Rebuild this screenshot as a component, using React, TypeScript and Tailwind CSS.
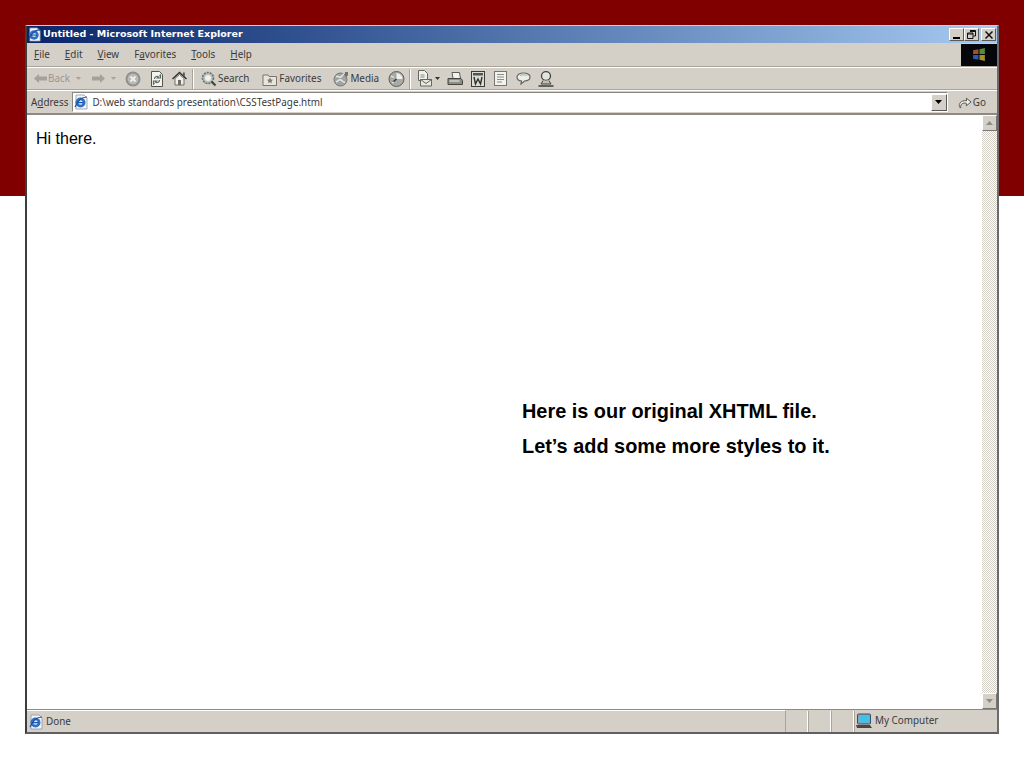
const ui = "font-['Noto_Sans',sans-serif] text-[9.900px] text-[#3a3a3a] whitespace-nowrap"

function IeIcon({ size = 16 }: { size?: number }) {
  return (
    <svg width={size} height={size} viewBox="0 0 16 16" className="shrink-0">
      <path d="M3 1h8l3 3v11H3z" fill="#f4f6fa" stroke="#8a93a8" strokeWidth="0.8" />
      <circle cx="7.5" cy="8.5" r="5" fill="#2f6fc4" />
      <circle cx="7.5" cy="8.5" r="2.2" fill="#dfeaf8" />
      <rect x="5" y="8" width="5.5" height="1.2" fill="#1f57a8" />
      <path d="M2 13C5 6 10 3 14 3" fill="none" stroke="#1d4f9c" strokeWidth="1.2" />
    </svg>
  )
}

function Arrow({ dir, color }: { dir: 'left' | 'right'; color: string }) {
  return (
    <svg width="15" height="11" viewBox="0 0 15 11" className="shrink-0">
      <path d={dir === 'left' ? 'M1 5.5L6 1v2.5h8v4H6V10z' : 'M14 5.5L9 1v2.5H1v4h8V10z'} fill={color} />
    </svg>
  )
}

function Caret({ color = '#a5a29b' }: { color?: string }) {
  return (
    <svg width="5" height="3" viewBox="0 0 5 3" className="shrink-0">
      <path d="M0 0h5L2.5 3z" fill={color} />
    </svg>
  )
}

function Separator() {
  return <div className="w-[2px] h-[20px] border-l border-l-[#a5a29b] border-r border-r-white shrink-0" />
}

function Stop() {
  return (
    <svg width="16" height="16" viewBox="0 0 16 16" className="shrink-0">
      <circle cx="8" cy="8" r="7.5" fill="#8f8f8c" />
      <circle cx="8" cy="8" r="5.5" fill="#b9b9b6" />
      <path d="M5.5 5.5l5 5m0-5l-5 5" stroke="#efefec" strokeWidth="1.8" />
    </svg>
  )
}

function Refresh() {
  return (
    <svg width="14" height="16" viewBox="0 0 14 16" className="shrink-0">
      <path d="M1.5.5h8l3 3v12h-11z" fill="#f3f3f1" stroke="#55554f" />
      <path d="M4.5 8a2.500 2.500 0 0 1 4-2l-1 1h3V4l-1 1" fill="none" stroke="#5c6a5c" strokeWidth="1.200" />
      <path d="M9.500 9a2.500 2.500 0 0 1-4 2l1-1h-3v3l1-1" fill="none" stroke="#5c6a5c" strokeWidth="1.200" />
    </svg>
  )
}

function Home() {
  return (
    <svg width="15" height="15" viewBox="0 0 15 15" className="shrink-0">
      <path d="M3 7.500V14h9V7.500L7.500 3.500z" fill="#efefe9" stroke="#55554f" strokeWidth="0.800" />
      <path d="M0.500 8L7.500 1.500l7 6.500" fill="none" stroke="#33332f" strokeWidth="1.500" />
      <rect x="6" y="9" width="3" height="5" fill="#6f6f67" />
      <rect x="11" y="1.500" width="1.800" height="3.500" fill="#55554f" />
    </svg>
  )
}

function SearchIcon() {
  return (
    <svg width="16" height="16" viewBox="0 0 16 16" className="shrink-0">
      <circle cx="7" cy="7" r="5.500" fill="#b7c2ba" stroke="#6b716c" strokeWidth="1.600" strokeDasharray="2 1" />
      <circle cx="7" cy="7" r="3" fill="#eef1ef" />
      <path d="M10.500 10.500l4 4" stroke="#3f433f" strokeWidth="2.200" />
    </svg>
  )
}

function FavoritesIcon() {
  return (
    <svg width="16" height="14" viewBox="0 0 16 14" className="shrink-0">
      <path d="M1 3h5l1 1.500h7.500V13.500H1z" fill="#e7e5de" stroke="#77756e" />
      <path d="M8 5.500l1 2 2 .2-1.500 1.500.4 2L8 10.200 6.100 11.200l.4-2L5 7.700l2-.2z" fill="#7c7a72" />
    </svg>
  )
}

function MediaIcon() {
  return (
    <svg width="17" height="16" viewBox="0 0 17 16" className="shrink-0">
      <circle cx="7.500" cy="8.500" r="6.500" fill="#a0a3a0" stroke="#777a76" />
      <path d="M3 6c2-2 3 1 5 0s1-3 3-3M3 11c2-1 3-3 5-2s2 3 4 2" stroke="#e3e5e2" strokeWidth="1.500" fill="none" />
      <path d="M12 1v5l3-1.500V1z" fill="#6f726e" />
    </svg>
  )
}

function HistoryIcon() {
  return (
    <svg width="17" height="16" viewBox="0 0 17 16" className="shrink-0">
      <circle cx="8.500" cy="8" r="7.500" fill="#a9aaa6" stroke="#5d5e5a" />
      <path d="M8.500 8V2A6 6 0 0 1 14.500 8z" fill="#f0f0ec" />
      <path d="M8.500 8l-3.500 3" stroke="#33342f" strokeWidth="1.500" />
      <path d="M3 5l3 1.500M4 12l2-1" stroke="#e8e8e4" strokeWidth="1.200" />
    </svg>
  )
}

function MailIcon() {
  return (
    <svg width="16" height="17" viewBox="0 0 16 17" className="shrink-0">
      <path d="M1.500.5h6l3 3v7h-9z" fill="#f0f0ec" stroke="#66665f" />
      <path d="M3.500 5h4M3.500 7h4" stroke="#8a8a82" />
      <path d="M3.500 9.500h11v6.500h-11z" fill="#e8e8e2" stroke="#66665f" />
      <path d="M3.500 9.500l5.500 4 5.500-4" fill="none" stroke="#66665f" />
    </svg>
  )
}

function PrintIcon() {
  return (
    <svg width="16" height="14" viewBox="0 0 16 14" className="shrink-0">
      <path d="M5 .500h7.500l1 6H6z" fill="#f2f2ee" stroke="#5d5d56" />
      <path d="M1 6.500h13l1.500 2v4H1z" fill="#8f8f88" stroke="#45453f" />
      <path d="M2.500 9h10" stroke="#e4e4e0" strokeWidth="1.200" />
    </svg>
  )
}

function WordIcon() {
  return (
    <svg width="14" height="16" viewBox="0 0 14 16" className="shrink-0">
      <rect x="0.500" y="0.500" width="13" height="15" fill="#dcdcd7" stroke="#3d3d38" />
      <rect x="2" y="2" width="10" height="2.500" fill="#55554f" />
      <path d="M3 6l1.500 7 2.500-5 2.500 5L11 6" fill="none" stroke="#2e2e2a" strokeWidth="1.400" />
    </svg>
  )
}

function DiscussIcon() {
  return (
    <svg width="13" height="15" viewBox="0 0 13 15" className="shrink-0">
      <rect x="0.500" y="0.500" width="12" height="14" fill="#f2f2ee" stroke="#77776f" />
      <path d="M3 3.500h7M3 6h7M3 8.500h7M3 11h5" stroke="#8c8c84" />
    </svg>
  )
}

function BubbleIcon() {
  return (
    <svg width="15" height="13" viewBox="0 0 15 13" className="shrink-0">
      <path d="M7.500 1C3.500 1 1 2.800 1 5s2 3.800 4.500 4L5 12l3.500-3c3.500-.2 5.500-1.800 5.500-4S11.500 1 7.500 1z" fill="#ecece8" stroke="#66665f" strokeWidth="1.200" />
      <path d="M4 3.500c2-.8 5-.8 7 0" stroke="#a8a8a0" fill="none" />
    </svg>
  )
}

function PersonIcon() {
  return (
    <svg width="16" height="16" viewBox="0 0 16 16" className="shrink-0">
      <ellipse cx="8" cy="5" rx="4.500" ry="4.300" fill="#e4e4df" stroke="#45453f" strokeWidth="1.300" />
      <path d="M5 9.500L3 13h10l-2-3.500" fill="#bdbdb7" stroke="#45453f" />
      <path d="M.500 15h15" stroke="#45453f" strokeWidth="1.600" />
    </svg>
  )
}

function WinButton({ children }: { children: React.ReactNode }) {
  return (
    <div className="w-[15px] h-[13px] bg-[#d4d0c8] border-t border-l border-t-white border-l-white border-r border-b border-r-[#5a5a5a] border-b-[#5a5a5a] flex items-center justify-center">
      {children}
    </div>
  )
}

function ScrollButton({ up }: { up: boolean }) {
  return (
    <div className="h-[16px] bg-[#d4d0c8] border-t border-l border-t-white border-l-white border-r border-b border-r-[#777] border-b-[#777] flex items-center justify-center shrink-0">
      <svg width="7" height="4" viewBox="0 0 7 4">
        <path d={up ? 'M3.500 0L7 4H0z' : 'M0 0h7L3.500 4z'} fill="#8d8d88" />
      </svg>
    </div>
  )
}

const menus: [string, string, string][] = [
  ['', 'F', 'ile'],
  ['', 'E', 'dit'],
  ['', 'V', 'iew'],
  ['F', 'a', 'vorites'],
  ['', 'T', 'ools'],
  ['', 'H', 'elp'],
]

export default function App() {
  return (
    <div className="relative w-[1024px] h-[768px] bg-white overflow-hidden">
      <div className="h-[196px] bg-[#800000]" />

      <div className="absolute left-[25px] top-[25px] w-[974px] h-[709px] flex flex-col bg-[#d4d0c8] border-l-2 border-l-[#3d3d3d] border-r-2 border-r-[#6b6b6b] border-b-2 border-b-[#5f5f5f] border-t border-t-[#d4d0c8]">
        <div className="h-[17px] shrink-0 flex items-center pl-[0px] pr-[1px] bg-gradient-to-r from-[#0a246a] to-[#a6caf0]">
          <IeIcon size={15} />
          <span className="ml-[1px] font-['DejaVu_Sans',sans-serif] font-bold text-[9.500px] text-white whitespace-nowrap">Untitled - Microsoft Internet Explorer</span>
          <div className="ml-auto flex">
            <WinButton><div className="w-[7px] h-[2px] mt-[6px] bg-black" /></WinButton>
            <WinButton>
              <svg width="9" height="9" viewBox="0 0 9 9"><path d="M3 .5h5.500V6H6.500M.5 3H6v5.500H.5zM3 1.500h5.500M.5 4h5.500" fill="none" stroke="#111" /></svg>
            </WinButton>
            <div className="ml-[2px]">
              <WinButton>
                <svg width="8" height="8" viewBox="0 0 8 8"><path d="M.5.500l7 7m0-7l-7 7" stroke="#111" strokeWidth="1.500" /></svg>
              </WinButton>
            </div>
          </div>
        </div>

        <div className="h-[24px] shrink-0 flex items-center border-b border-b-[#a8a59d] pl-[7px]">
          <div className="flex gap-[15px]">
            {menus.map(([before, key, after]) => (
              <span key={before + key} className={ui}>
                {before}<span className="underline">{key}</span>{after}
              </span>
            ))}
          </div>
          <div className="ml-auto mr-[0px] w-[36px] h-[22px] bg-[#05070c] flex items-center justify-center">
            <svg width="15" height="13" viewBox="0 0 14 12" className="blur-[0.6px]">
              <path d="M1 2l5-1v4.500H1z" fill="#a0502d" />
              <path d="M7 1l5-1v5.500H7z" fill="#5a8a35" />
              <path d="M1 6.500h5V11l-5-1z" fill="#2f5c9e" />
              <path d="M7 6.500h5V12l-5-1z" fill="#a88e2c" />
            </svg>
          </div>
        </div>

        <div className="h-[23px] shrink-0 flex items-center border-t border-t-white border-b border-b-[#a8a59d] pl-[6px]">
          <Arrow dir="left" color="#a5a29b" />
          <span className="font-['Noto_Sans',sans-serif] text-[9.900px] text-[#9a9790]">Back</span>
          <div className="ml-[6px]"><Caret /></div>
          <div className="ml-[10px]"><Arrow dir="right" color="#a5a29b" /></div>
          <div className="ml-[5px]"><Caret /></div>
          <div className="ml-[9px]"><Stop /></div>
          <div className="ml-[9px]"><Refresh /></div>
          <div className="ml-[8px] mr-[5px]"><Home /></div>
          <Separator />
          <div className="ml-[7px]"><SearchIcon /></div>
          <span className={`ml-[1px] ${ui}`}>Search</span>
          <div className="ml-[13px]"><FavoritesIcon /></div>
          <span className={`ml-[1px] ${ui}`}>Favorites</span>
          <div className="ml-[12px]"><MediaIcon /></div>
          <span className={ui}>Media</span>
          <div className="ml-[9px] mr-[4px]"><HistoryIcon /></div>
          <Separator />
          <div className="ml-[6px]"><MailIcon /></div>
          <div className="ml-[2px]"><Caret color="#333" /></div>
          <div className="ml-[7px]"><PrintIcon /></div>
          <div className="ml-[8px]"><WordIcon /></div>
          <div className="ml-[9px]"><DiscussIcon /></div>
          <div className="ml-[9px]"><BubbleIcon /></div>
          <div className="ml-[7px]"><PersonIcon /></div>
        </div>

        <div className="h-[23px] shrink-0 flex items-center border-t border-t-white pl-[4px] pr-[11px]">
          <span className={ui}>A<span className="underline">d</span>dress</span>
          <div className="ml-[4px] flex-1 h-[20px] flex items-center bg-white border border-t-[#8a877f] border-l-[#8a877f] border-r-white border-b-white">
            <IeIcon />
            <span className={`ml-[3px] ${ui}`}>D:\web standards presentation\CSSTestPage.html</span>
            <div className="ml-auto w-[16px] h-[17px] bg-[#d4d0c8] border border-t-white border-l-white border-r-[#5a5a5a] border-b-[#5a5a5a] flex items-center justify-center">
              <svg width="7" height="4" viewBox="0 0 7 4"><path d="M0 0h7L3.500 4z" fill="#000" /></svg>
            </div>
          </div>
          <div className="ml-[10px] flex items-center">
            <svg width="14" height="16" viewBox="0 0 15 16" className="shrink-0">
              <path d="M2 14c-1.500-3 0-6 3-7s4 0 4 0V4l5 4-5 4V9.500s-2-1-4 0-2.500 3-2 4.500z" fill="#f1f1ed" stroke="#4c4c46" />
            </svg>
            <span className={`ml-[1px] ${ui}`}>Go</span>
          </div>
        </div>

        <div className="flex-1 min-h-0 flex border-t-2 border-t-[#8c8a83] bg-white">
          <div className="flex-1 pt-[15px] pl-[9px] font-['Liberation_Sans',sans-serif] text-[16px] leading-[18px] text-black">Hi there.</div>
          <div className="w-[15px] flex flex-col bg-[repeating-conic-gradient(#d4d0c8_0_25%,#ffffff_0_50%)] bg-[length:2px_2px]">
            <ScrollButton up />
            <div className="flex-1" />
            <ScrollButton up={false} />
          </div>
        </div>

        <div className="h-[23px] shrink-0 flex items-center border-t border-t-[#8c8a83]">
          <div className="flex-1 flex items-center pl-[1px] border-t border-t-white h-full">
            <IeIcon />
            <span className={`ml-[2px] pb-[1px] ${ui}`}>Done</span>
          </div>
          <div className="w-[23px] h-[21px] border-l border-r border-l-[#a8a59d] border-r-white" />
          <div className="w-[23px] h-[21px] border-r border-r-white border-l border-l-[#a8a59d]" />
          <div className="w-[23px] h-[21px] border-r border-r-white border-l border-l-[#a8a59d]" />
          <div className="w-[143px] h-[21px] flex items-center border-l border-l-[#a8a59d]">
            <svg width="18" height="16" viewBox="0 0 16 16" className="shrink-0">
              <rect x="1.500" y="1" width="13" height="10" rx="1" fill="#8fa0b8" stroke="#3f4a63" />
              <rect x="3" y="2.500" width="10" height="7" fill="#3ec3e4" />
              <path d="M0 12h14l2 3H1z" fill="#4a473f" />
            </svg>
            <span className={`ml-[2px] pb-[1px] ${ui}`}>My Computer</span>
          </div>
        </div>
      </div>

      <div className="absolute left-[522px] top-[394px] font-['Liberation_Sans',sans-serif] font-bold text-[19.900px] leading-[35px] text-black whitespace-nowrap">
        <p>Here is our original XHTML file.</p>
        <p>Let’s add some more styles to it.</p>
      </div>
    </div>
  )
}
